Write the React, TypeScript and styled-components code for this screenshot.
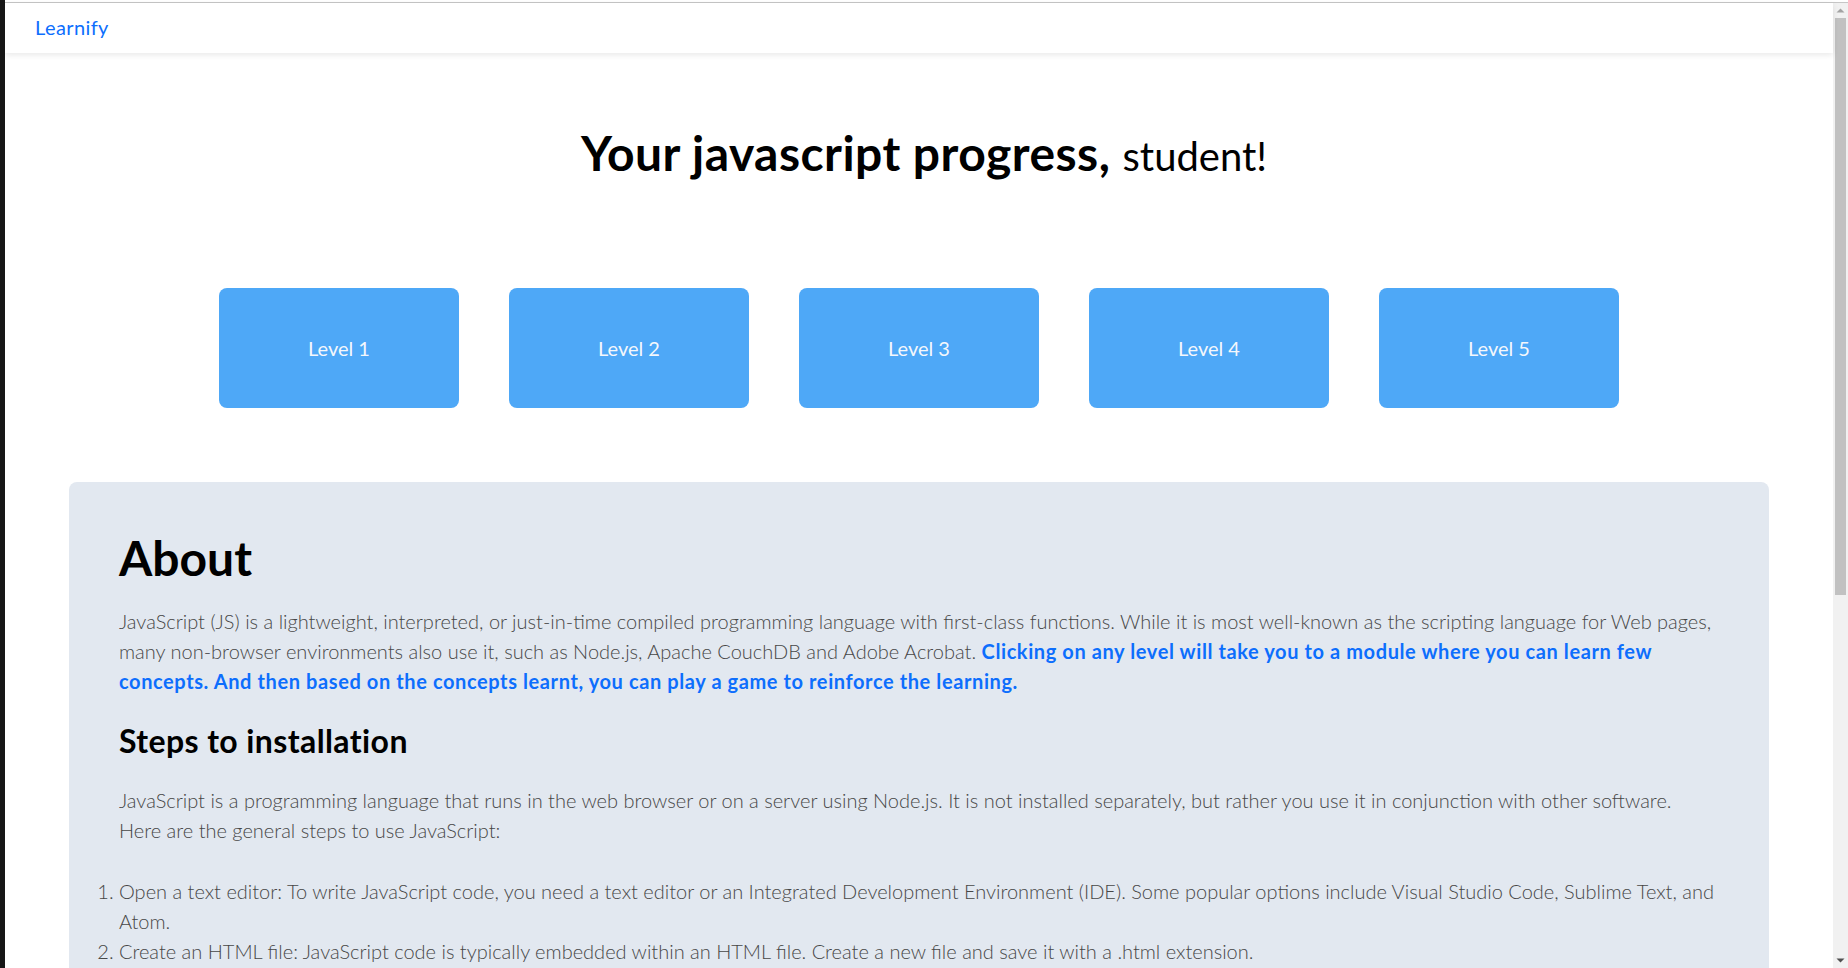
import React from "react";
import styled, { createGlobalStyle } from "styled-components";

const GlobalStyle = createGlobalStyle`
  html, body {
    margin: 0;
    padding: 0;
  }
  html {
    scrollbar-width: none;
  }
  body {
    background: #ffffff;
    border-left: 5px solid #161616;
    padding-top: 2px;
    font-family: Lato, "Open Sans", "DejaVu Sans", sans-serif;
    color: #000;
  }
  #root {
    border-top: 1px solid #c6c6c6;
  }
`;

const Shell = styled.div`
  display: flex;
  align-items: flex-start;
`;

const Page = styled.div`
  flex: 1;
  min-width: 0;
`;

const ScrollRail = styled.div`
  flex: 0 0 15px;
  width: 15px;
  height: calc(100vh - 3px);
  position: sticky;
  top: 0;
  display: flex;
  flex-direction: column;
  background: #f1f1f1;
`;

const RailButton = styled.div`
  height: 15px;
  flex: 0 0 15px;
  display: flex;
  align-items: center;
  justify-content: center;
`;

const RailTrack = styled.div`
  flex: 1;
  padding: 0 2px;
`;

const RailThumb = styled.div<{ $size: number }>`
  height: ${(p) => p.$size}px;
  background: #c1c1c1;
`;

const Navbar = styled.nav`
  position: relative;
  z-index: 1;
  height: 50px;
  box-sizing: border-box;
  display: flex;
  align-items: center;
  padding: 0 30px 2px;
  background: #ffffff;
  box-shadow: 0 2px 6px rgba(0, 0, 0, 0.09);
`;

const Brand = styled.a`
  color: #0d6efd;
  font-size: 20px;
  letter-spacing: 0.4px;
  text-decoration: none;
`;

const Main = styled.main`
  display: flex;
  flex-direction: column;
  padding-bottom: 400px;
`;

const Title = styled.h1`
  margin: 71px 0 0;
  padding-left: 10px;
  text-align: center;
  font-size: 48px;
  line-height: 58px;
  font-weight: 700;
  letter-spacing: 0.45px;
  color: #000;
`;

const TitleName = styled.span`
  font-weight: 400;
  font-size: 40px;
  letter-spacing: 0;
`;

const Levels = styled.div`
  display: flex;
  justify-content: center;
  gap: 50px;
  margin-top: 103px;
`;

const LevelButton = styled.button`
  width: 240px;
  height: 120px;
  border: none;
  border-radius: 8px;
  background: #4ea8f7;
  color: #f4f7fc;
  font-family: inherit;
  font-size: 20px;
  display: flex;
  align-items: center;
  justify-content: center;
  cursor: pointer;
`;

const Card = styled.section`
  margin: 74px 64px 0;
  background: #e2e8f0;
  border-radius: 8px;
  padding: 47px 52px 60px 50px;
`;

const CardTitle = styled.h2`
  margin: 0;
  font-size: 48px;
  line-height: 58px;
  font-weight: 700;
  color: #000;
`;

const SubTitle = styled.h3`
  margin: 27px 0 0;
  font-size: 32px;
  line-height: 36px;
  font-weight: 700;
  letter-spacing: 0.4px;
  color: #000;
`;

const Lead = styled.p<{ $gap: number }>`
  margin: ${(p) => p.$gap}px 0 0;
  font-size: 20px;
  line-height: 30px;
  font-weight: 300;
  color: #474747;
`;

const Highlight = styled.strong`
  color: #0d6efd;
  font-weight: 700;
  letter-spacing: 0.6px;
`;

const Steps = styled.ol`
  margin: 31px 0 0;
  padding: 0;
  list-style: decimal outside;
  font-size: 20px;
  line-height: 30px;
  font-weight: 300;
  color: #474747;
`;

const Step = styled.li`
  margin: 0;
`;

const steps = [
  "Open a text editor: To write JavaScript code, you need a text editor or an Integrated Development Environment (IDE). Some popular options include Visual Studio Code, Sublime Text, and Atom.",
  "Create an HTML file: JavaScript code is typically embedded within an HTML file. Create a new file and save it with a .html extension.",
  "Add a script tag: Inside the HTML file, add a <script> tag where your JavaScript code will live, or link to an external .js file.",
  "Write your JavaScript code: Start writing JavaScript inside the script tag or in the external file.",
  "Open the HTML file in a web browser: The browser will run your JavaScript code when the page loads.",
  "Use the developer tools: Open the browser console to see output and errors while you learn.",
];

function Arrow({ up }: { up: boolean }) {
  return (
    <svg width="9" height="5" viewBox="0 0 9 5">
      <polygon
        points={up ? "0.5,4.5 4.5,0.5 8.5,4.5" : "0.5,0.5 4.5,4.5 8.5,0.5"}
        fill={up ? "#a3a3a3" : "#505050"}
      />
    </svg>
  );
}

export default function App() {
  return (
    <>
      <GlobalStyle />
      <Shell>
        <Page>
          <Navbar>
            <Brand href="#">Learnify</Brand>
          </Navbar>
          <Main>
            <Title>
              Your javascript progress, <TitleName>student!</TitleName>
            </Title>
            <Levels>
              {[1, 2, 3, 4, 5].map((n) => (
                <LevelButton key={n}>Level {n}</LevelButton>
              ))}
            </Levels>
            <Card>
              <CardTitle>About</CardTitle>
              <Lead $gap={19}>
                JavaScript (JS) is a lightweight, interpreted, or just-in-time compiled programming
                language with first-class functions. While it is most well-known as the scripting
                language for Web pages, many non-browser environments also use it, such as Node.js,
                Apache CouchDB and Adobe Acrobat.{" "}
                <Highlight>
                  Clicking on any level will take you to a module where you can learn few concepts.
                  And then based on the concepts learnt, you can play a game to reinforce the
                  learning.
                </Highlight>
              </Lead>
              <SubTitle>Steps to installation</SubTitle>
              <Lead $gap={26}>
                JavaScript is a programming language that runs in the web browser or on a server
                using Node.js. It is not installed separately, but rather you use it in conjunction
                with other software. Here are the general steps to use JavaScript:
              </Lead>
              <Steps>
                {steps.map((s) => (
                  <Step key={s}>{s}</Step>
                ))}
              </Steps>
            </Card>
          </Main>
        </Page>
        <ScrollRail>
          <RailButton>
            <Arrow up />
          </RailButton>
          <RailTrack>
            <RailThumb $size={577} />
          </RailTrack>
          <RailButton>
            <Arrow up={false} />
          </RailButton>
        </ScrollRail>
      </Shell>
    </>
  );
}
